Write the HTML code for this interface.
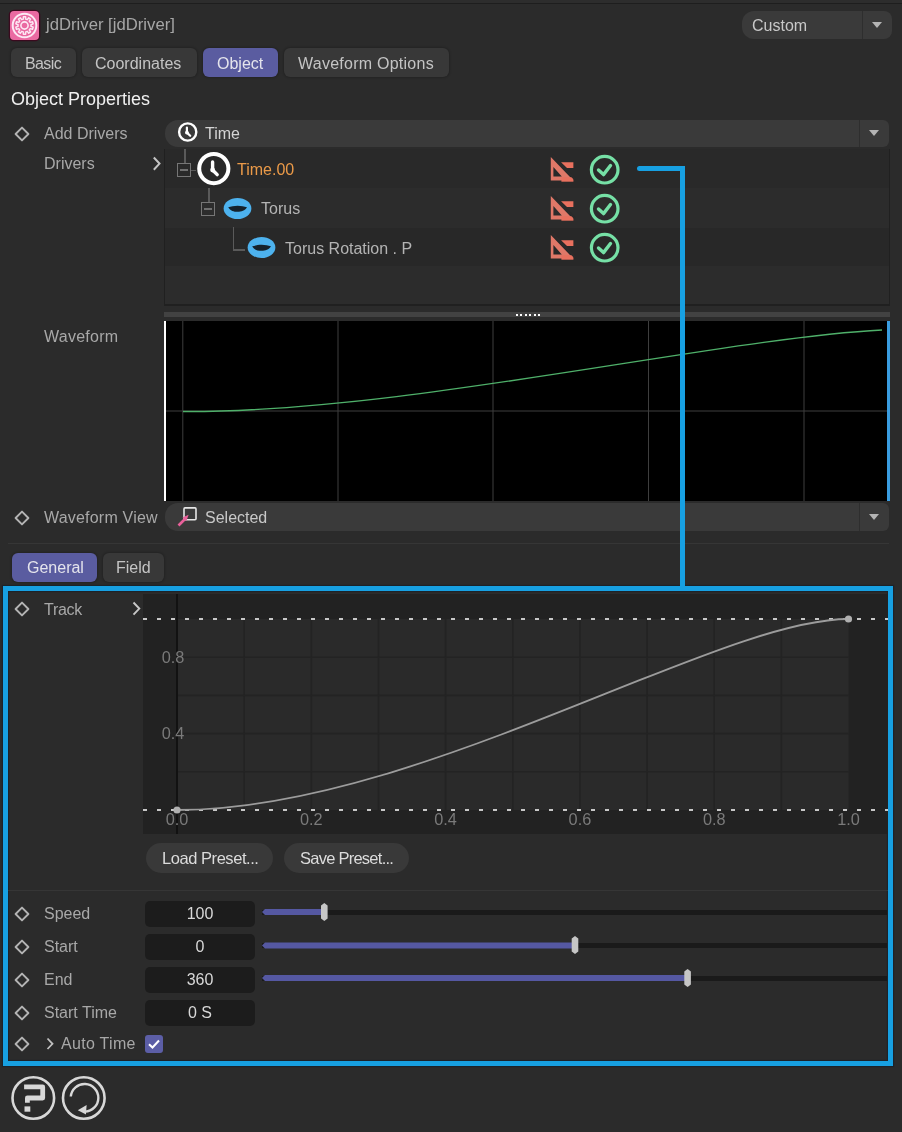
<!DOCTYPE html>
<html><head><meta charset="utf-8">
<style>
*{margin:0;padding:0;box-sizing:border-box}
html,body{width:902px;height:1132px;overflow:hidden;background:#2b2b2b}
body{position:relative;font-family:"Liberation Sans",sans-serif;color:#a8a8a8}
.a{position:absolute}
.t{position:absolute;white-space:nowrap;font-size:16px;line-height:16px;will-change:transform}
.tab{position:absolute;background:#383838;border-radius:6px;box-shadow:0 0 2px 1px rgba(0,0,0,0.18)}
.tab.on{background:#5a5ca0}
.dia{position:absolute;width:10px;height:10px;border:1.8px solid #aaaaaa;border-radius:1.5px;transform:translate(0.6px,0.6px) rotate(45deg)}
.dd{position:absolute;background:#3a3a3a;border-radius:13px 6px 6px 13px}
.arr{position:absolute;width:0;height:0;border-left:5.2px solid transparent;border-right:5.2px solid transparent;border-top:6.5px solid #b4b4b4}
.fld{position:absolute;background:#1c1c1c;border-radius:5px;left:145px;width:110px;height:26px}
.val{position:absolute;left:145px;width:110px;text-align:center;font-size:16px;line-height:16px;color:#d8d8d8;will-change:transform}
</style></head><body>

<!-- top band -->
<div class="a" style="left:0;top:0;width:902px;height:3px;background:#2d2d2d"></div>
<div class="a" style="left:0;top:2.6px;width:902px;height:1.3px;background:#1e1e1e"></div>

<!-- header icon -->
<div class="a" style="left:10px;top:11px;width:29px;height:28.5px;background:#ea6aa2;border-radius:4px;box-shadow:0 0 0 1.3px #3a0a1e"></div>
<svg class="a" style="left:10px;top:10.5px" width="29" height="29" viewBox="0 0 29 29">
 <circle cx="14.5" cy="14.5" r="11.8" fill="none" stroke="#fde8f4" stroke-width="2"/>
 <path d="M13.40 5.77 L15.60 5.77 L15.72 8.12 L17.27 8.62 L18.74 6.79 L20.52 8.09 L19.24 10.05 L20.20 11.37 L22.46 10.75 L23.14 12.85 L20.95 13.69 L20.95 15.31 L23.14 16.15 L22.46 18.25 L20.20 17.63 L19.24 18.95 L20.52 20.91 L18.74 22.21 L17.27 20.38 L15.72 20.88 L15.60 23.23 L13.40 23.23 L13.28 20.88 L11.73 20.38 L10.26 22.21 L8.48 20.91 L9.76 18.95 L8.80 17.63 L6.54 18.25 L5.86 16.15 L8.05 15.31 L8.05 13.69 L5.86 12.85 L6.54 10.75 L8.80 11.37 L9.76 10.05 L8.48 8.09 L10.26 6.79 L11.73 8.62 L13.28 8.12 Z" fill="none" stroke="#fde8f4" stroke-width="1.5" stroke-linejoin="round"/>
 <circle cx="14.5" cy="14.5" r="3.6" fill="none" stroke="#fde8f4" stroke-width="1.6"/>
</svg>
<div class="t" style="left:46px;top:17.3px;font-size:16.7px;line-height:16.7px;color:#a6a6a6">jdDriver [jdDriver]</div>

<!-- custom dropdown -->
<div class="dd" style="left:742px;top:11px;width:150px;height:28px;border-radius:12px 8px 8px 12px"></div>
<div class="a" style="left:862px;top:11px;width:1px;height:28px;background:#2e2e2e"></div>
<div class="t" style="left:752px;top:18.1px;color:#c8c8c8">Custom</div>
<div class="arr" style="left:872px;top:22px"></div>

<!-- tabs -->
<div class="tab" style="left:11px;top:48px;width:65px;height:28.5px"></div>
<div class="t" style="left:25px;top:55.9px;color:#c4c4c4;letter-spacing:-0.6px">Basic</div>
<div class="tab" style="left:82px;top:48px;width:115px;height:28.5px"></div>
<div class="t" style="left:95px;top:55.9px;color:#c4c4c4">Coordinates</div>
<div class="tab on" style="left:203px;top:48px;width:75px;height:28.5px"></div>
<div class="t" style="left:217px;top:55.9px;color:#e4e4ec">Object</div>
<div class="tab" style="left:284px;top:48px;width:165px;height:28.5px"></div>
<div class="t" style="left:297.5px;top:55.9px;color:#c4c4c4;letter-spacing:0.25px">Waveform Options</div>

<div class="t" style="left:11px;top:90.3px;font-size:18px;line-height:18px;color:#f0f0f0">Object Properties</div>

<!-- add drivers row -->
<svg class="a" style="left:13.6px;top:125.6px" width="16" height="16" viewBox="0 0 16 16"><path d="M8 1.6 L14.4 8 L8 14.4 L1.6 8 Z" fill="none" stroke="#b4b4b4" stroke-width="1.9" stroke-linejoin="round"/></svg>
<div class="t" style="left:44px;top:125.9px">Add Drivers</div>
<div class="dd" style="left:165px;top:120px;width:724px;height:27px"></div>
<div class="a" style="left:859px;top:120px;width:1px;height:27px;background:#2e2e2e"></div>
<div class="arr" style="left:869px;top:130px"></div>
<svg class="a" style="left:176px;top:121px" width="24" height="24" viewBox="0 0 24 24">
 <circle cx="11.7" cy="11" r="8.6" fill="none" stroke="#fff" stroke-width="2.4"/>
 <circle cx="10.9" cy="11.6" r="1.9" fill="#fff"/>
 <path d="M10.9 6.6 L10.9 11.6 L14.2 14.8" fill="none" stroke="#fff" stroke-width="2.2" stroke-linecap="round" stroke-linejoin="round"/>
</svg>
<div class="t" style="left:205px;top:126.0px;color:#d4d4d4">Time</div>

<!-- drivers -->
<div class="t" style="left:44px;top:156.2px">Drivers</div>
<svg class="a" style="left:150px;top:156px" width="14" height="16" viewBox="0 0 14 16">
 <path d="M3.8 1.5 L9.5 7.6 L3.8 13.7" fill="none" stroke="#c4c4c4" stroke-width="2"/>
</svg>

<!-- tree panel -->
<div class="a" style="left:164px;top:149px;width:726px;height:157px;background:#202020"></div>
<div class="a" style="left:165.3px;top:149px;width:723.4px;height:155px;background:#2c2c2c"></div>
<div class="a" style="left:165.3px;top:149px;width:723.4px;height:39px;background:#292929"></div>
<div class="a" style="left:165.3px;top:188px;width:723.4px;height:40px;background:#2c2c2c"></div>
<div class="a" style="left:165.3px;top:228px;width:723.4px;height:37.5px;background:#282828"></div>
<div class="a" style="left:165.3px;top:265.5px;width:723.4px;height:38.5px;background:#2c2c2c"></div>

<!-- tree lines / boxes -->
<div class="a" style="left:184px;top:149px;width:1.5px;height:14px;background:#5a5a5a"></div>
<div class="a" style="left:177px;top:163px;width:14px;height:14px;border:1.8px solid #767676"></div>
<div class="a" style="left:180px;top:169.3px;width:8px;height:1.5px;background:#707070"></div>
<div class="a" style="left:191px;top:169.5px;width:5px;height:1.5px;background:#5a5a5a"></div>
<svg class="a" style="left:196px;top:151px" width="36" height="36" viewBox="0 0 36 36">
 <circle cx="17.8" cy="17.6" r="14.6" fill="none" stroke="#fff" stroke-width="4"/>
 <circle cx="16.6" cy="19" r="2.4" fill="#fff"/>
 <path d="M16.6 11 L16.6 19 L21.2 23.6" fill="none" stroke="#fff" stroke-width="3.4" stroke-linecap="round" stroke-linejoin="round"/>
</svg>
<div class="t" style="left:237.3px;top:161.9px;color:#eb9a48">Time.00</div>

<div class="a" style="left:208px;top:188px;width:1.5px;height:14px;background:#5a5a5a"></div>
<div class="a" style="left:201px;top:202px;width:14px;height:14px;border:1.8px solid #767676"></div>
<div class="a" style="left:204px;top:208.3px;width:8px;height:1.5px;background:#707070"></div>
<svg class="a" style="left:222px;top:196px" width="32" height="25" viewBox="0 0 32 25">
 <ellipse cx="15.5" cy="12.5" rx="13.85" ry="10.5" fill="#4db2ee"/>
 <path d="M6.2 11.2 C9 10.6 12 9.8 15.6 9.8 C19.2 9.8 22.2 10.6 25 11.3 C22.8 14.8 19.5 15.8 15.6 15.8 C11.7 15.8 8.4 14.8 6.2 11.2 Z" fill="#15222c"/>
</svg>
<div class="t" style="left:261px;top:201.2px;color:#b4b4b4">Torus</div>

<div class="a" style="left:232.5px;top:227px;width:1.5px;height:23px;background:#5a5a5a"></div>
<div class="a" style="left:232.5px;top:249px;width:12px;height:1.5px;background:#5a5a5a"></div>
<svg class="a" style="left:246px;top:235px" width="32" height="25" viewBox="0 0 32 25">
 <ellipse cx="15.5" cy="12.5" rx="13.85" ry="10.5" fill="#4db2ee"/>
 <path d="M6.2 11.2 C9 10.6 12 9.8 15.6 9.8 C19.2 9.8 22.2 10.6 25 11.3 C22.8 14.8 19.5 15.8 15.6 15.8 C11.7 15.8 8.4 14.8 6.2 11.2 Z" fill="#15222c"/>
</svg>
<div class="t" style="left:285px;top:240.7px;color:#b4b4b4">Torus Rotation . P</div>

<!-- red & green icons -->
<svg class="a" style="left:548px;top:154px" width="80" height="110" viewBox="0 0 80 110">
 <defs>
  <g id="ri">
   <path d="M2.8 2.9 L2.8 26.6 L25.4 26.6 Z M5.4 13 L5.4 22.4 L13.8 22.4 Z" fill="#e07868" fill-rule="evenodd"/>
   <path d="M13 8.2 L25.4 8.2 L25.4 14 L19 14 Z" fill="#e8705e"/>
   <path d="M13.4 23.2 L25.4 23.2 L25.4 27.7 L13.4 27.7 Z" fill="#e8705e"/>
   <path d="M4.2 1 L27 25.2" stroke="#2a2a2a" stroke-width="2.4"/>
  </g>
  <g id="gi">
   <circle cx="56.7" cy="15.7" r="13.3" fill="none" stroke="#76e0a6" stroke-width="3.2"/>
   <path d="M50.5 16 L55.5 20.6 L62.5 11.5" fill="none" stroke="#76e0a6" stroke-width="3.4" stroke-linecap="round" stroke-linejoin="round"/>
  </g>
 </defs>
 <use href="#ri"/><use href="#gi"/>
 <use href="#ri" y="39"/><use href="#gi" y="39"/>
 <use href="#ri" y="78"/><use href="#gi" y="78"/>
</svg>

<!-- splitter -->
<div class="a" style="left:164px;top:312px;width:726px;height:5px;background:#424242"></div>
<div class="a" style="left:516px;top:314px;width:2px;height:2px;background:#fff;box-shadow:4px 0 #fff,9px 0 #fff,13px 0 #fff,18px 0 #fff,22px 0 #fff"></div>

<!-- waveform -->
<div class="t" style="left:44px;top:329.2px;letter-spacing:0.25px">Waveform</div>
<div class="a" style="left:164px;top:321px;width:726px;height:180px;background:#000"></div>
<div class="a" style="left:164px;top:321px;width:2px;height:180px;background:#fff"></div>
<div class="a" style="left:887px;top:321px;width:3px;height:180px;background:#3a9de0"></div>
<svg class="a" style="left:166px;top:321px" width="721" height="180" viewBox="166 321 721 180">
 <g stroke="#3e3e3e" stroke-width="1">
  <line x1="182.8" y1="321" x2="182.8" y2="501"/>
  <line x1="338" y1="321" x2="338" y2="501"/>
  <line x1="493" y1="321" x2="493" y2="501"/>
  <line x1="648.5" y1="321" x2="648.5" y2="501"/>
  <line x1="804" y1="321" x2="804" y2="501"/>
  <line x1="166" y1="411" x2="887" y2="411"/>
 </g>
 <path d="M183 411.5 C403.9 412.8 716 338.8 882 330" fill="none" stroke="#4fb06a" stroke-width="1.3"/>
</svg>

<!-- waveform view -->
<svg class="a" style="left:13.6px;top:509.6px" width="16" height="16" viewBox="0 0 16 16"><path d="M8 1.6 L14.4 8 L8 14.4 L1.6 8 Z" fill="none" stroke="#b4b4b4" stroke-width="1.9" stroke-linejoin="round"/></svg>
<div class="t" style="left:44px;top:509.5px;letter-spacing:0.2px">Waveform View</div>
<div class="dd" style="left:165px;top:503px;width:724px;height:28px"></div>
<div class="a" style="left:859px;top:503px;width:1px;height:28px;background:#2e2e2e"></div>
<div class="arr" style="left:869px;top:514px"></div>
<svg class="a" style="left:170px;top:500px" width="30" height="30" viewBox="170 500 30 30">
 <rect x="184" y="507.9" width="12" height="11.9" rx="1" fill="none" stroke="#e6e6e6" stroke-width="1.6"/>
 <path d="M178.5 525.5 L186 518" stroke="#e8609a" stroke-width="2.6"/>
 <path d="M182.5 517.5 L188.6 514.8 L186.4 521 Z" fill="#e8609a"/>
</svg>
<div class="t" style="left:205px;top:510.2px;color:#c8c8c8">Selected</div>

<div class="a" style="left:8px;top:543px;width:881px;height:1px;background:#363636"></div>

<!-- general / field tabs -->
<div class="tab on" style="left:12px;top:553px;width:85px;height:28.5px"></div>
<div class="t" style="left:26.6px;top:560.4px;color:#e4e4ec">General</div>
<div class="tab" style="left:103px;top:553px;width:61px;height:28.5px"></div>
<div class="t" style="left:116.4px;top:560.4px;color:#c4c4c4">Field</div>

<!-- blue box -->
<div class="a" style="left:3px;top:586px;width:890px;height:480px;border:5px solid #17a0e2;box-shadow:0 0 1px 1px rgba(0,20,40,0.35),inset 0 0 1px 1px rgba(0,20,40,0.35)"></div>
<!-- connector -->
<div class="a" style="left:636.5px;top:166px;width:48.5px;height:5px;background:#17a0e2;border-radius:2.5px 1px 0 2.5px"></div>
<div class="a" style="left:680px;top:166px;width:5px;height:421px;background:#17a0e2"></div>

<!-- track -->
<svg class="a" style="left:13.6px;top:600.6px" width="16" height="16" viewBox="0 0 16 16"><path d="M8 1.6 L14.4 8 L8 14.4 L1.6 8 Z" fill="none" stroke="#b4b4b4" stroke-width="1.9" stroke-linejoin="round"/></svg>
<div class="t" style="left:44px;top:601.9px;letter-spacing:-0.3px">Track</div>
<svg class="a" style="left:129.5px;top:600.8px" width="14" height="16" viewBox="0 0 14 16">
 <path d="M3.5 1.5 L9.3 7.6 L3.5 13.7" fill="none" stroke="#c8c8c8" stroke-width="1.9"/>
</svg>

<svg class="a" style="left:0;top:0;will-change:transform" width="902" height="1132" viewBox="0 0 902 1132">
 <rect x="143" y="594" width="745" height="240" fill="#222222"/>
 <rect x="177" y="619" width="671.5" height="191" fill="#2a2a2a"/>
 <g stroke="#232323" stroke-width="1.6">
  <line x1="244.2" y1="619" x2="244.2" y2="810"/>
  <line x1="311.3" y1="619" x2="311.3" y2="810"/>
  <line x1="378.5" y1="619" x2="378.5" y2="810"/>
  <line x1="445.6" y1="619" x2="445.6" y2="810"/>
  <line x1="512.8" y1="619" x2="512.8" y2="810"/>
  <line x1="579.9" y1="619" x2="579.9" y2="810"/>
  <line x1="647.1" y1="619" x2="647.1" y2="810"/>
  <line x1="714.2" y1="619" x2="714.2" y2="810"/>
  <line x1="781.4" y1="619" x2="781.4" y2="810"/>
  <line x1="177" y1="657.2" x2="848.5" y2="657.2"/>
  <line x1="177" y1="695.4" x2="848.5" y2="695.4"/>
  <line x1="177" y1="733.6" x2="848.5" y2="733.6"/>
  <line x1="177" y1="771.8" x2="848.5" y2="771.8"/>
 </g>
 <line x1="177" y1="594" x2="177" y2="834" stroke="#121212" stroke-width="2"/>
 <line x1="143" y1="619" x2="888" y2="619" stroke="#c8c8c8" stroke-width="2" stroke-dasharray="4 10"/>
 <line x1="143" y1="810" x2="888" y2="810" stroke="#c8c8c8" stroke-width="2" stroke-dasharray="4 10"/>
 <path d="M177 810 C417.4 810 716.2 619 848.5 619" fill="none" stroke="#9c9c9c" stroke-width="1.8"/>
 <circle cx="177" cy="810" r="3.6" fill="#b0b0b0"/>
 <circle cx="848.5" cy="619" r="3.6" fill="#b0b0b0"/>
 <g font-family="Liberation Sans" font-size="16.3" fill="#7a7a7a" text-anchor="middle">
  <text x="173" y="663">0.8</text>
  <text x="173" y="739">0.4</text>
  <text x="177" y="825">0.0</text>
  <text x="311.3" y="825">0.2</text>
  <text x="445.6" y="825">0.4</text>
  <text x="579.9" y="825">0.6</text>
  <text x="714.2" y="825">0.8</text>
  <text x="848.5" y="825">1.0</text>
 </g>
</svg>

<!-- buttons -->
<div class="dd" style="left:146px;top:843px;width:127px;height:30px;border-radius:15px;background:#393939"></div>
<div class="t" style="left:161.5px;top:850px;color:#dcdcdc;font-size:16.5px;line-height:16.5px;letter-spacing:-0.45px">Load Preset...</div>
<div class="dd" style="left:284px;top:843px;width:125px;height:30px;border-radius:15px;background:#393939"></div>
<div class="t" style="left:299.5px;top:850px;color:#dcdcdc;font-size:16.5px;line-height:16.5px;letter-spacing:-0.75px">Save Preset...</div>

<div class="a" style="left:8px;top:890px;width:880px;height:1px;background:#363636"></div>

<!-- params -->
<svg class="a" style="left:13.6px;top:905.6px" width="16" height="16" viewBox="0 0 16 16"><path d="M8 1.6 L14.4 8 L8 14.4 L1.6 8 Z" fill="none" stroke="#b4b4b4" stroke-width="1.9" stroke-linejoin="round"/></svg>
<div class="t" style="left:43.8px;top:905.9px">Speed</div>
<div class="fld" style="top:901px"></div>
<div class="val" style="top:905.9px">100</div>

<svg class="a" style="left:13.6px;top:938.6px" width="16" height="16" viewBox="0 0 16 16"><path d="M8 1.6 L14.4 8 L8 14.4 L1.6 8 Z" fill="none" stroke="#b4b4b4" stroke-width="1.9" stroke-linejoin="round"/></svg>
<div class="t" style="left:43.8px;top:938.9px">Start</div>
<div class="fld" style="top:934px"></div>
<div class="val" style="top:938.9px">0</div>

<svg class="a" style="left:13.6px;top:971.6px" width="16" height="16" viewBox="0 0 16 16"><path d="M8 1.6 L14.4 8 L8 14.4 L1.6 8 Z" fill="none" stroke="#b4b4b4" stroke-width="1.9" stroke-linejoin="round"/></svg>
<div class="t" style="left:43.8px;top:971.9px">End</div>
<div class="fld" style="top:967px"></div>
<div class="val" style="top:971.9px">360</div>

<svg class="a" style="left:13.6px;top:1004.6px" width="16" height="16" viewBox="0 0 16 16"><path d="M8 1.6 L14.4 8 L8 14.4 L1.6 8 Z" fill="none" stroke="#b4b4b4" stroke-width="1.9" stroke-linejoin="round"/></svg>
<div class="t" style="left:43.8px;top:1004.9px">Start Time</div>
<div class="fld" style="top:1000px"></div>
<div class="val" style="top:1004.9px">0 S</div>

<svg class="a" style="left:13.6px;top:1035.6px" width="16" height="16" viewBox="0 0 16 16"><path d="M8 1.6 L14.4 8 L8 14.4 L1.6 8 Z" fill="none" stroke="#b4b4b4" stroke-width="1.9" stroke-linejoin="round"/></svg>
<svg class="a" style="left:44px;top:1036px" width="12" height="16" viewBox="0 0 12 16">
 <path d="M3.5 2.5 L8.5 7.8 L3.5 13" fill="none" stroke="#c0c0c0" stroke-width="1.8"/>
</svg>
<div class="t" style="left:61px;top:1035.9px;letter-spacing:0.3px">Auto Time</div>
<div class="a" style="left:145px;top:1035px;width:18px;height:18px;background:#5c5ea6;border-radius:3px"></div>
<svg class="a" style="left:145px;top:1035px" width="18" height="18" viewBox="0 0 18 18">
 <path d="M4 9.2 L7.5 12.5 L14 5.5" fill="none" stroke="#fff" stroke-width="2"/>
</svg>

<!-- sliders -->
<svg class="a" style="left:0;top:0" width="902" height="1132" viewBox="0 0 902 1132">
 <g fill="#1a1a1a">
  <rect x="262" y="910" width="625" height="5"/>
  <rect x="262" y="943" width="625" height="5"/>
  <rect x="262" y="976" width="625" height="5"/>
 </g>
 <g fill="#5558a2">
  <path d="M262 912 L265 909 L324 909 L324 915 L265 915 Z"/>
  <path d="M262 945.5 L265 942.5 L575 942.5 L575 948.5 L265 948.5 Z"/>
  <path d="M262 978 L265 975 L687.5 975 L687.5 981 L265 981 Z"/>
 </g>
 <g fill="#c6c6c6">
  <path d="M321 905.5 L324.3 903 L327.6 905.5 L327.6 918.5 L324.3 921 L321 918.5 Z"/>
  <path d="M571.7 938.5 L575 936 L578.3 938.5 L578.3 951.5 L575 954 L571.7 951.5 Z"/>
  <path d="M684.3 971.5 L687.6 969 L690.9 971.5 L690.9 984.5 L687.6 987 L684.3 984.5 Z"/>
 </g>
</svg>

<!-- footer icons -->
<svg class="a" style="left:0;top:1066px" width="120" height="66" viewBox="0 1066 120 66">
 <circle cx="33.3" cy="1098" r="20.8" fill="none" stroke="#d8d8d8" stroke-width="2.6"/>
 <path d="M24.1 1086.9 H42.7 V1098 H27.4 V1102.8" fill="none" stroke="#d8d8d8" stroke-width="4.8" stroke-linejoin="round"/>
 <rect x="24.5" y="1106.4" width="5.8" height="5.3" fill="#d8d8d8"/>
 <circle cx="83.8" cy="1098" r="20.8" fill="none" stroke="#d8d8d8" stroke-width="2.6"/>
 <path d="M70.8 1096.5 A13.8 13.8 0 1 1 85 1111.6" fill="none" stroke="#d8d8d8" stroke-width="2.4"/>
 <path d="M77.8 1110.3 L86.6 1105 L86 1114.6 Z" fill="#d8d8d8"/>
</svg>

</body></html>
